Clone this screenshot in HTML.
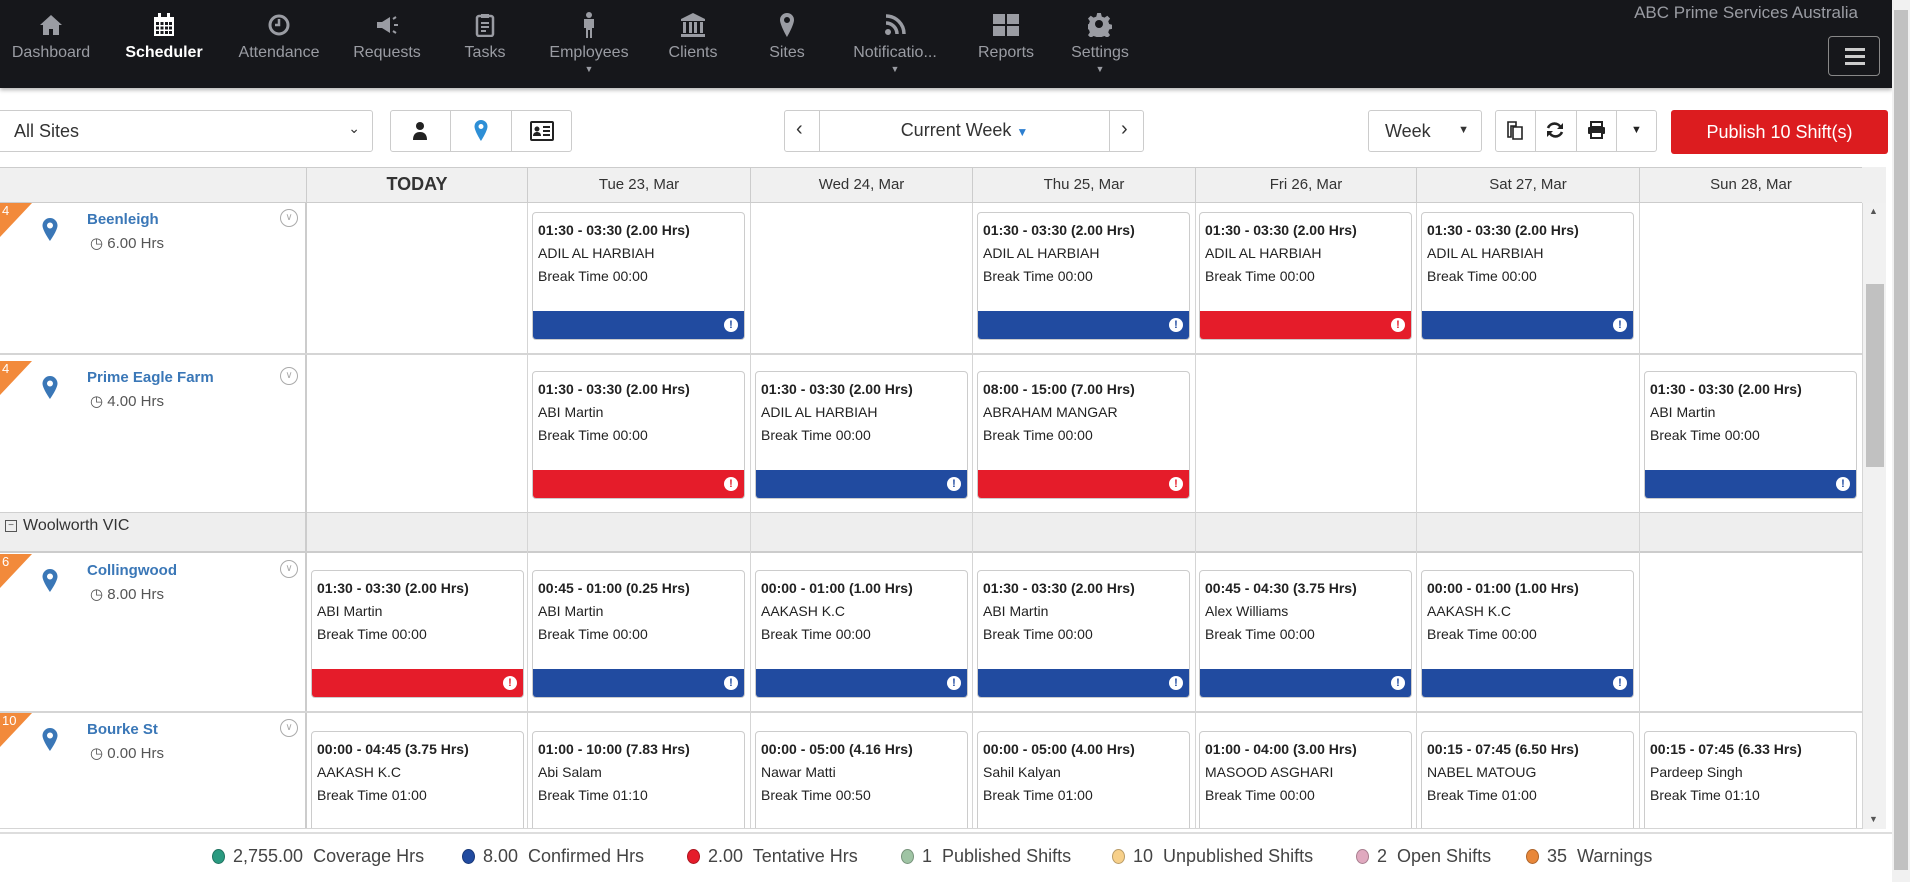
<!DOCTYPE html>
<html><head><meta charset="utf-8"><style>
*{box-sizing:border-box;margin:0;padding:0}
body{width:1910px;height:882px;overflow:hidden;background:#fff;font-family:"Liberation Sans",sans-serif;position:relative;color:#333}
.nav{position:absolute;left:0;top:0;width:1892px;height:88px;background:#16171b;box-shadow:0 2px 4px rgba(0,0,0,.3)}
.ni{position:absolute;top:0;width:120px;margin-left:-60px;text-align:center;color:#9a9ca3;font-size:16px}
.ni .ic{height:24px;margin-top:13px;display:flex;justify-content:center;align-items:center}
.ni .lb{margin-top:7px}
.ni.act{color:#fff;font-weight:bold}
.ni .car{font-size:9px;margin-top:2px}
.brand{position:absolute;right:34px;top:3px;color:#9a9ca3;font-size:17px}
.ham{position:absolute;left:1828px;top:36px;width:52px;height:40px;border:1px solid #888;border-radius:4px}
.ham i{position:absolute;left:16px;width:20px;height:3px;background:#ccc}
.box{position:absolute;border:1px solid #ccc;border-radius:3px;background:#fff}
.abs{position:absolute}
.hdr{position:absolute;top:167px;height:36px;background:#f0f0f0;border-top:1px solid #ccc;border-bottom:1px solid #ccc}
.hc{position:absolute;top:167px;height:35px;line-height:35px;text-align:center;font-size:15px;color:#333;border-left:1px solid #ccc}
.vl{position:absolute;width:1px;background:#d5d5d5;top:203px;height:626px}
.hl{position:absolute;left:0;width:1862px;height:2px;background:#d5d5d5}
.card{position:absolute;width:213px;height:128px;border:1px solid #ccc;border-radius:4px;background:#fff;font-size:14px;color:#222;padding:6px 0 0 5px;line-height:23px;overflow:hidden}
.card b{font-weight:bold;font-size:14px}
.bar{position:absolute;left:0;right:0;bottom:0;height:28px}
.bar i{position:absolute;right:6px;top:7px;width:14px;height:14px;border-radius:50%;background:#fff;color:#234;font-size:11px;font-weight:bold;font-style:normal;line-height:14px;text-align:center}
.blue{background:#214ba0}.red{background:#e51c2a}
.blue i{color:#214ba0}.red i{color:#e51c2a}
.site{position:absolute;left:0;width:305px}
.tri{position:absolute;left:0;top:0;width:0;height:0;border-top:34px solid #f28a3b;border-right:32px solid transparent}
.tri span{position:absolute;left:2px;top:-34px;color:#fff;font-size:13px}
.sname{position:absolute;left:87px;top:8px;color:#3a77b7;font-weight:bold;font-size:15px}
.shrs{position:absolute;left:90px;top:31px;color:#555;font-size:15px}
.chev{position:absolute;left:280px;top:6px;width:18px;height:18px;border:1px solid #aaa;border-radius:50%;color:#aaa;font-size:10px;text-align:center;line-height:16px}
.pin{position:absolute;left:42px;top:15px}
.lg{position:absolute;top:846px;font-size:18px;color:#444;display:flex;align-items:center}
.lg i{display:inline-block;width:13px;height:15px;border-radius:50%;margin-right:8px;border:1px solid rgba(0,0,0,.25)}
</style></head><body>
<div class="nav">
 <div class="ni" style="left:51px"><div class="ic"><svg width="24" height="22" viewBox="0 0 24 22"><path d="M12 1L1 11h3v10h6v-6h4v6h6V11h3z" fill="#9a9ca3"/></svg></div><div class="lb">Dashboard</div></div>
 <div class="ni act" style="left:164px"><div class="ic"><svg width="22" height="24" viewBox="0 0 22 24"><rect x="1" y="4" width="20" height="19" fill="#fff"/><g fill="#16171b"><rect x="3" y="9" width="3" height="3"/><rect x="7.5" y="9" width="3" height="3"/><rect x="12" y="9" width="3" height="3"/><rect x="16" y="9" width="3" height="3"/><rect x="3" y="13.5" width="3" height="3"/><rect x="7.5" y="13.5" width="3" height="3"/><rect x="12" y="13.5" width="3" height="3"/><rect x="16" y="13.5" width="3" height="3"/><rect x="3" y="18" width="3" height="3"/><rect x="7.5" y="18" width="3" height="3"/><rect x="12" y="18" width="3" height="3"/><rect x="16" y="18" width="3" height="3"/></g><rect x="5" y="0" width="3" height="6" fill="#fff"/><rect x="14" y="0" width="3" height="6" fill="#fff"/></svg></div><div class="lb">Scheduler</div></div>
 <div class="ni" style="left:279px"><div class="ic"><svg width="22" height="22"><circle cx="11" cy="11" r="9" fill="none" stroke="#9a9ca3" stroke-width="3"/><path d="M11 5v6h-4" stroke="#9a9ca3" stroke-width="2.5" fill="none"/></svg></div><div class="lb">Attendance</div></div>
 <div class="ni" style="left:387px"><div class="ic"><svg width="24" height="20"><path d="M2 7h5l8-5v16l-8-5H2z" fill="#9a9ca3"/><path d="M18 4l3-2M19 10h4M18 16l3 2" stroke="#9a9ca3" stroke-width="2"/></svg></div><div class="lb">Requests</div></div>
 <div class="ni" style="left:485px"><div class="ic"><svg width="20" height="24"><rect x="2" y="3" width="16" height="20" rx="2" fill="none" stroke="#9a9ca3" stroke-width="2.5"/><rect x="6" y="1" width="8" height="4" fill="#9a9ca3"/><path d="M6 10h8M6 14h8M6 18h5" stroke="#9a9ca3" stroke-width="2"/></svg></div><div class="lb">Tasks</div></div>
 <div class="ni" style="left:589px"><div class="ic"><svg width="14" height="26"><circle cx="7" cy="3" r="3" fill="#9a9ca3"/><path d="M2 7h10v9h-2v10H8v-8H6v8H4V16H2z" fill="#9a9ca3"/></svg></div><div class="lb">Employees</div><div class="car">▼</div></div>
 <div class="ni" style="left:693px"><div class="ic"><svg width="26" height="24"><path d="M13 0L1 6v2h24V6zM3 9h3v11H3zM9 9h3v11H9zM14 9h3v11h-3zM20 9h3v11h-3zM1 21h24v3H1z" fill="#9a9ca3"/></svg></div><div class="lb">Clients</div></div>
 <div class="ni" style="left:787px"><div class="ic"><svg width="16" height="24"><path d="M8 0a7 7 0 0 0-7 7c0 5 7 17 7 17s7-12 7-17a7 7 0 0 0-7-7zm0 10a3 3 0 1 1 0-6 3 3 0 0 1 0 6z" fill="#9a9ca3"/></svg></div><div class="lb">Sites</div></div>
 <div class="ni" style="left:895px"><div class="ic"><svg width="22" height="22"><circle cx="4" cy="18" r="3" fill="#9a9ca3"/><path d="M2 9a11 11 0 0 1 11 11M2 2a18 18 0 0 1 18 18" stroke="#9a9ca3" stroke-width="3.5" fill="none"/></svg></div><div class="lb">Notificatio...</div><div class="car">▼</div></div>
 <div class="ni" style="left:1006px"><div class="ic"><svg width="26" height="22"><rect x="0" y="0" width="12" height="10" fill="#9a9ca3"/><rect x="14" y="0" width="12" height="10" fill="#9a9ca3"/><rect x="0" y="12" width="12" height="10" fill="#9a9ca3"/><rect x="14" y="12" width="12" height="10" fill="#9a9ca3"/></svg></div><div class="lb">Reports</div></div>
 <div class="ni" style="left:1100px"><div class="ic"><svg width="24" height="24" viewBox="0 0 24 24"><path d="M10 0h4l1 4 3 1 3-2 3 3-2 3 1 3 4 1v4l-4 1-1 3 2 3-3 3-3-2-3 1-1 4h-4l-1-4-3-1-3 2-3-3 2-3-1-3-4-1v-4l4-1 1-3-2-3 3-3 3 2 3-1z" fill="#9a9ca3" transform="scale(.92)"/><circle cx="11" cy="11" r="4" fill="#16171b"/></svg></div><div class="lb">Settings</div><div class="car">▼</div></div>
 <div class="brand">ABC Prime Services Australia</div>
 <div class="ham"><i style="top:11px"></i><i style="top:18px"></i><i style="top:25px"></i></div>
</div>
<div class="abs" style="left:1892px;top:0;width:18px;height:882px;background:#f1f1f1"></div>
<div class="abs" style="left:1894px;top:10px;width:14px;height:860px;background:#c1c1c1"></div>
<div class="box" style="left:-4px;top:110px;width:377px;height:42px;font-size:18px;padding:10px 17px;color:#333">All Sites<span style="position:absolute;right:12px;top:9px;font-size:14px">&#8964;</span></div>
<div class="box" style="left:390px;top:110px;width:182px;height:42px"></div>
<div class="abs" style="left:450px;top:110px;width:1px;height:42px;background:#ccc"></div>
<div class="abs" style="left:511px;top:110px;width:1px;height:42px;background:#ccc"></div>
<svg class="abs" style="left:412px;top:121px" width="16" height="20"><circle cx="8" cy="5" r="4" fill="#222"/><path d="M1 19c0-6 3-8 7-8s7 2 7 8z" fill="#222"/></svg>
<svg class="abs" style="left:474px;top:120px" width="14" height="22"><path d="M7 0a6.5 6.5 0 0 0-6.5 6.5C.5 11 7 21 7 21s6.5-10 6.5-14.5A6.5 6.5 0 0 0 7 0zm0 9a2.5 2.5 0 1 1 0-5 2.5 2.5 0 0 1 0 5z" fill="#2d8fd6"/></svg>
<svg class="abs" style="left:530px;top:121px" width="24" height="20"><rect x="1" y="1" width="22" height="18" rx="1" fill="none" stroke="#222" stroke-width="2"/><circle cx="7" cy="8" r="2.5" fill="#222"/><path d="M3 15c0-3 2-4 4-4s4 1 4 4z" fill="#222"/><path d="M13 6h7M13 10h7M13 14h7" stroke="#222" stroke-width="2"/></svg>
<div class="box" style="left:784px;top:110px;width:360px;height:42px"></div>
<div class="abs" style="left:819px;top:110px;width:1px;height:42px;background:#ccc"></div>
<div class="abs" style="left:1109px;top:110px;width:1px;height:42px;background:#ccc"></div>
<div class="abs" style="left:796px;top:118px;font-size:20px;color:#333">&#8249;</div>
<div class="abs" style="left:1121px;top:118px;font-size:20px;color:#333">&#8250;</div>
<div class="abs" style="left:820px;top:120px;width:289px;text-align:center;font-size:18px;color:#333">Current Week <span style="color:#2d7fd0;font-size:12px">▼</span></div>
<div class="box" style="left:1368px;top:110px;width:114px;height:42px;font-size:18px;padding:10px 16px;color:#333">Week<span style="position:absolute;right:12px;top:13px;font-size:11px">▼</span></div>
<div class="box" style="left:1495px;top:110px;width:162px;height:42px"></div>
<div class="abs" style="left:1535px;top:110px;width:1px;height:42px;background:#ccc"></div>
<div class="abs" style="left:1576px;top:110px;width:1px;height:42px;background:#ccc"></div>
<div class="abs" style="left:1616px;top:110px;width:1px;height:42px;background:#ccc"></div>
<svg class="abs" style="left:1506px;top:120px" width="19" height="20"><path d="M2 2h8v4h-5v11H2zM7 7h9v12H7z" fill="none" stroke="#222" stroke-width="1.6"/></svg>
<svg class="abs" style="left:1546px;top:121px" width="18" height="18"><path d="M15 7a7 7 0 0 0-13 0M3 11a7 7 0 0 0 13 0" fill="none" stroke="#222" stroke-width="2.6"/><path d="M17 2v6h-6zM1 16v-6h6z" fill="#222"/></svg>
<svg class="abs" style="left:1587px;top:121px" width="19" height="18"><rect x="4" y="1" width="11" height="5" fill="none" stroke="#222" stroke-width="2"/><rect x="1" y="6" width="17" height="7" rx="1" fill="#222"/><rect x="4" y="11" width="11" height="6" fill="#fff" stroke="#222" stroke-width="2"/></svg>
<div class="abs" style="left:1631px;top:124px;font-size:11px;color:#222">▼</div>
<div class="abs" style="left:1671px;top:110px;width:217px;height:44px;background:#dc1c1f;border-radius:3px;color:#fff;font-size:18px;text-align:center;line-height:44px">Publish 10 Shift(s)</div>
<div class="hdr" style="left:0;width:1862px"></div>
<div class="hc" style="left:306px;width:221px;font-weight:bold;font-size:18px">TODAY</div>
<div class="hc" style="left:527px;width:223px">Tue 23, Mar</div>
<div class="hc" style="left:750px;width:222px">Wed 24, Mar</div>
<div class="hc" style="left:972px;width:223px">Thu 25, Mar</div>
<div class="hc" style="left:1195px;width:221px">Fri 26, Mar</div>
<div class="hc" style="left:1416px;width:223px">Sat 27, Mar</div>
<div class="hc" style="left:1639px;width:223px">Sun 28, Mar</div>
<div class="abs" style="left:1862px;top:167px;width:24px;height:36px;background:#f0f0f0"></div>
<div class="vl" style="left:305px;width:2px;background:#ccc"></div>
<div class="vl" style="left:527px"></div><div class="vl" style="left:750px"></div><div class="vl" style="left:972px"></div><div class="vl" style="left:1195px"></div><div class="vl" style="left:1416px"></div><div class="vl" style="left:1639px"></div><div class="vl" style="left:1862px"></div>
<div class="hl" style="top:353px"></div>
<div class="abs" style="left:0;top:512px;width:1862px;height:41px;background:#eee;border-top:1px solid #d0d0d0;border-bottom:2px solid #ccc"></div>
<div class="abs" style="left:305px;top:512px;width:2px;height:41px;background:#ccc"></div>
<div class="abs" style="left:527px;top:512px;width:1px;height:41px;background:#d5d5d5"></div><div class="abs" style="left:750px;top:512px;width:1px;height:41px;background:#d5d5d5"></div><div class="abs" style="left:972px;top:512px;width:1px;height:41px;background:#d5d5d5"></div><div class="abs" style="left:1195px;top:512px;width:1px;height:41px;background:#d5d5d5"></div><div class="abs" style="left:1416px;top:512px;width:1px;height:41px;background:#d5d5d5"></div><div class="abs" style="left:1639px;top:512px;width:1px;height:41px;background:#d5d5d5"></div>
<div class="abs" style="left:5px;top:520px;width:12px;height:12px;border:1px solid #555;font-size:10px;line-height:9px;text-align:center;color:#555">−</div>
<div class="abs" style="left:23px;top:517px;font-size:16px;color:#333">Woolworth VIC</div>
<div class="hl" style="top:711px"></div>
<div class="hl" style="top:828px;height:1px"></div>
<div class="abs" style="left:1863px;top:203px;width:23px;height:626px;background:#f1f1f1"></div>
<div class="abs" style="left:1866px;top:284px;width:18px;height:183px;background:#c1c1c1"></div>
<div class="abs" style="left:1869px;top:206px;font-size:9px;color:#555">▲</div>
<div class="abs" style="left:1869px;top:814px;font-size:9px;color:#555">▼</div>
<div class="site" style="top:203px"><div class="tri"><span>4</span></div><svg class="pin" width="16" height="24"><path d="M8 0a7.5 7.5 0 0 0-7.5 7.5C.5 12.5 8 23 8 23s7.5-10.5 7.5-15.5A7.5 7.5 0 0 0 8 0zm0 10.5a3 3 0 1 1 0-6 3 3 0 0 1 0 6z" fill="#3a77b7"/></svg><div class="sname">Beenleigh</div><div class="shrs">◷ 6.00 Hrs</div><div class="chev">∨</div></div>
<div class="site" style="top:361px"><div class="tri"><span>4</span></div><svg class="pin" width="16" height="24"><path d="M8 0a7.5 7.5 0 0 0-7.5 7.5C.5 12.5 8 23 8 23s7.5-10.5 7.5-15.5A7.5 7.5 0 0 0 8 0zm0 10.5a3 3 0 1 1 0-6 3 3 0 0 1 0 6z" fill="#3a77b7"/></svg><div class="sname">Prime Eagle Farm</div><div class="shrs">◷ 4.00 Hrs</div><div class="chev">∨</div></div>
<div class="site" style="top:554px"><div class="tri"><span>6</span></div><svg class="pin" width="16" height="24"><path d="M8 0a7.5 7.5 0 0 0-7.5 7.5C.5 12.5 8 23 8 23s7.5-10.5 7.5-15.5A7.5 7.5 0 0 0 8 0zm0 10.5a3 3 0 1 1 0-6 3 3 0 0 1 0 6z" fill="#3a77b7"/></svg><div class="sname">Collingwood</div><div class="shrs">◷ 8.00 Hrs</div><div class="chev">∨</div></div>
<div class="site" style="top:713px"><div class="tri"><span>10</span></div><svg class="pin" width="16" height="24"><path d="M8 0a7.5 7.5 0 0 0-7.5 7.5C.5 12.5 8 23 8 23s7.5-10.5 7.5-15.5A7.5 7.5 0 0 0 8 0zm0 10.5a3 3 0 1 1 0-6 3 3 0 0 1 0 6z" fill="#3a77b7"/></svg><div class="sname">Bourke St</div><div class="shrs">◷ 0.00 Hrs</div><div class="chev">∨</div></div>
<div class="card" style="left:532px;top:212px"><b>01:30 - 03:30 (2.00 Hrs)</b><br>ADIL AL HARBIAH<br>Break Time 00:00<div class="bar blue"><i>!</i></div></div>
<div class="card" style="left:977px;top:212px"><b>01:30 - 03:30 (2.00 Hrs)</b><br>ADIL AL HARBIAH<br>Break Time 00:00<div class="bar blue"><i>!</i></div></div>
<div class="card" style="left:1199px;top:212px"><b>01:30 - 03:30 (2.00 Hrs)</b><br>ADIL AL HARBIAH<br>Break Time 00:00<div class="bar red"><i>!</i></div></div>
<div class="card" style="left:1421px;top:212px"><b>01:30 - 03:30 (2.00 Hrs)</b><br>ADIL AL HARBIAH<br>Break Time 00:00<div class="bar blue"><i>!</i></div></div>
<div class="card" style="left:532px;top:371px"><b>01:30 - 03:30 (2.00 Hrs)</b><br>ABI Martin<br>Break Time 00:00<div class="bar red"><i>!</i></div></div>
<div class="card" style="left:755px;top:371px"><b>01:30 - 03:30 (2.00 Hrs)</b><br>ADIL AL HARBIAH<br>Break Time 00:00<div class="bar blue"><i>!</i></div></div>
<div class="card" style="left:977px;top:371px"><b>08:00 - 15:00 (7.00 Hrs)</b><br>ABRAHAM MANGAR<br>Break Time 00:00<div class="bar red"><i>!</i></div></div>
<div class="card" style="left:1644px;top:371px"><b>01:30 - 03:30 (2.00 Hrs)</b><br>ABI Martin<br>Break Time 00:00<div class="bar blue"><i>!</i></div></div>
<div class="card" style="left:311px;top:570px"><b>01:30 - 03:30 (2.00 Hrs)</b><br>ABI Martin<br>Break Time 00:00<div class="bar red"><i>!</i></div></div>
<div class="card" style="left:532px;top:570px"><b>00:45 - 01:00 (0.25 Hrs)</b><br>ABI Martin<br>Break Time 00:00<div class="bar blue"><i>!</i></div></div>
<div class="card" style="left:755px;top:570px"><b>00:00 - 01:00 (1.00 Hrs)</b><br>AAKASH K.C<br>Break Time 00:00<div class="bar blue"><i>!</i></div></div>
<div class="card" style="left:977px;top:570px"><b>01:30 - 03:30 (2.00 Hrs)</b><br>ABI Martin<br>Break Time 00:00<div class="bar blue"><i>!</i></div></div>
<div class="card" style="left:1199px;top:570px"><b>00:45 - 04:30 (3.75 Hrs)</b><br>Alex Williams<br>Break Time 00:00<div class="bar blue"><i>!</i></div></div>
<div class="card" style="left:1421px;top:570px"><b>00:00 - 01:00 (1.00 Hrs)</b><br>AAKASH K.C<br>Break Time 00:00<div class="bar blue"><i>!</i></div></div>
<div class="abs" style="left:0;top:713px;width:1862px;height:115px;overflow:hidden">
<div class="card" style="left:311px;top:18px"><b>00:00 - 04:45 (3.75 Hrs)</b><br>AAKASH K.C<br>Break Time 01:00</div>
<div class="card" style="left:532px;top:18px"><b>01:00 - 10:00 (7.83 Hrs)</b><br>Abi Salam<br>Break Time 01:10</div>
<div class="card" style="left:755px;top:18px"><b>00:00 - 05:00 (4.16 Hrs)</b><br>Nawar Matti<br>Break Time 00:50</div>
<div class="card" style="left:977px;top:18px"><b>00:00 - 05:00 (4.00 Hrs)</b><br>Sahil Kalyan<br>Break Time 01:00</div>
<div class="card" style="left:1199px;top:18px"><b>01:00 - 04:00 (3.00 Hrs)</b><br>MASOOD ASGHARI<br>Break Time 00:00</div>
<div class="card" style="left:1421px;top:18px"><b>00:15 - 07:45 (6.50 Hrs)</b><br>NABEL MATOUG<br>Break Time 01:00</div>
<div class="card" style="left:1644px;top:18px"><b>00:15 - 07:45 (6.33 Hrs)</b><br>Pardeep Singh<br>Break Time 01:10</div>
</div>
<div class="abs" style="left:0;top:832px;width:1892px;height:2px;background:#ddd"></div>
<div class="lg" style="left:212px"><i style="background:#2a9a80"></i>2,755.00&nbsp; Coverage Hrs</div>
<div class="lg" style="left:462px"><i style="background:#214ba0"></i>8.00&nbsp; Confirmed Hrs</div>
<div class="lg" style="left:687px"><i style="background:#e51c2a"></i>2.00&nbsp; Tentative Hrs</div>
<div class="lg" style="left:901px"><i style="background:#9fc4a4"></i>1&nbsp; Published Shifts</div>
<div class="lg" style="left:1112px"><i style="background:#f7d08a"></i>10&nbsp; Unpublished Shifts</div>
<div class="lg" style="left:1356px"><i style="background:#e0a9bf"></i>2&nbsp; Open Shifts</div>
<div class="lg" style="left:1526px"><i style="background:#e8873a"></i>35&nbsp; Warnings</div>
</body></html>
